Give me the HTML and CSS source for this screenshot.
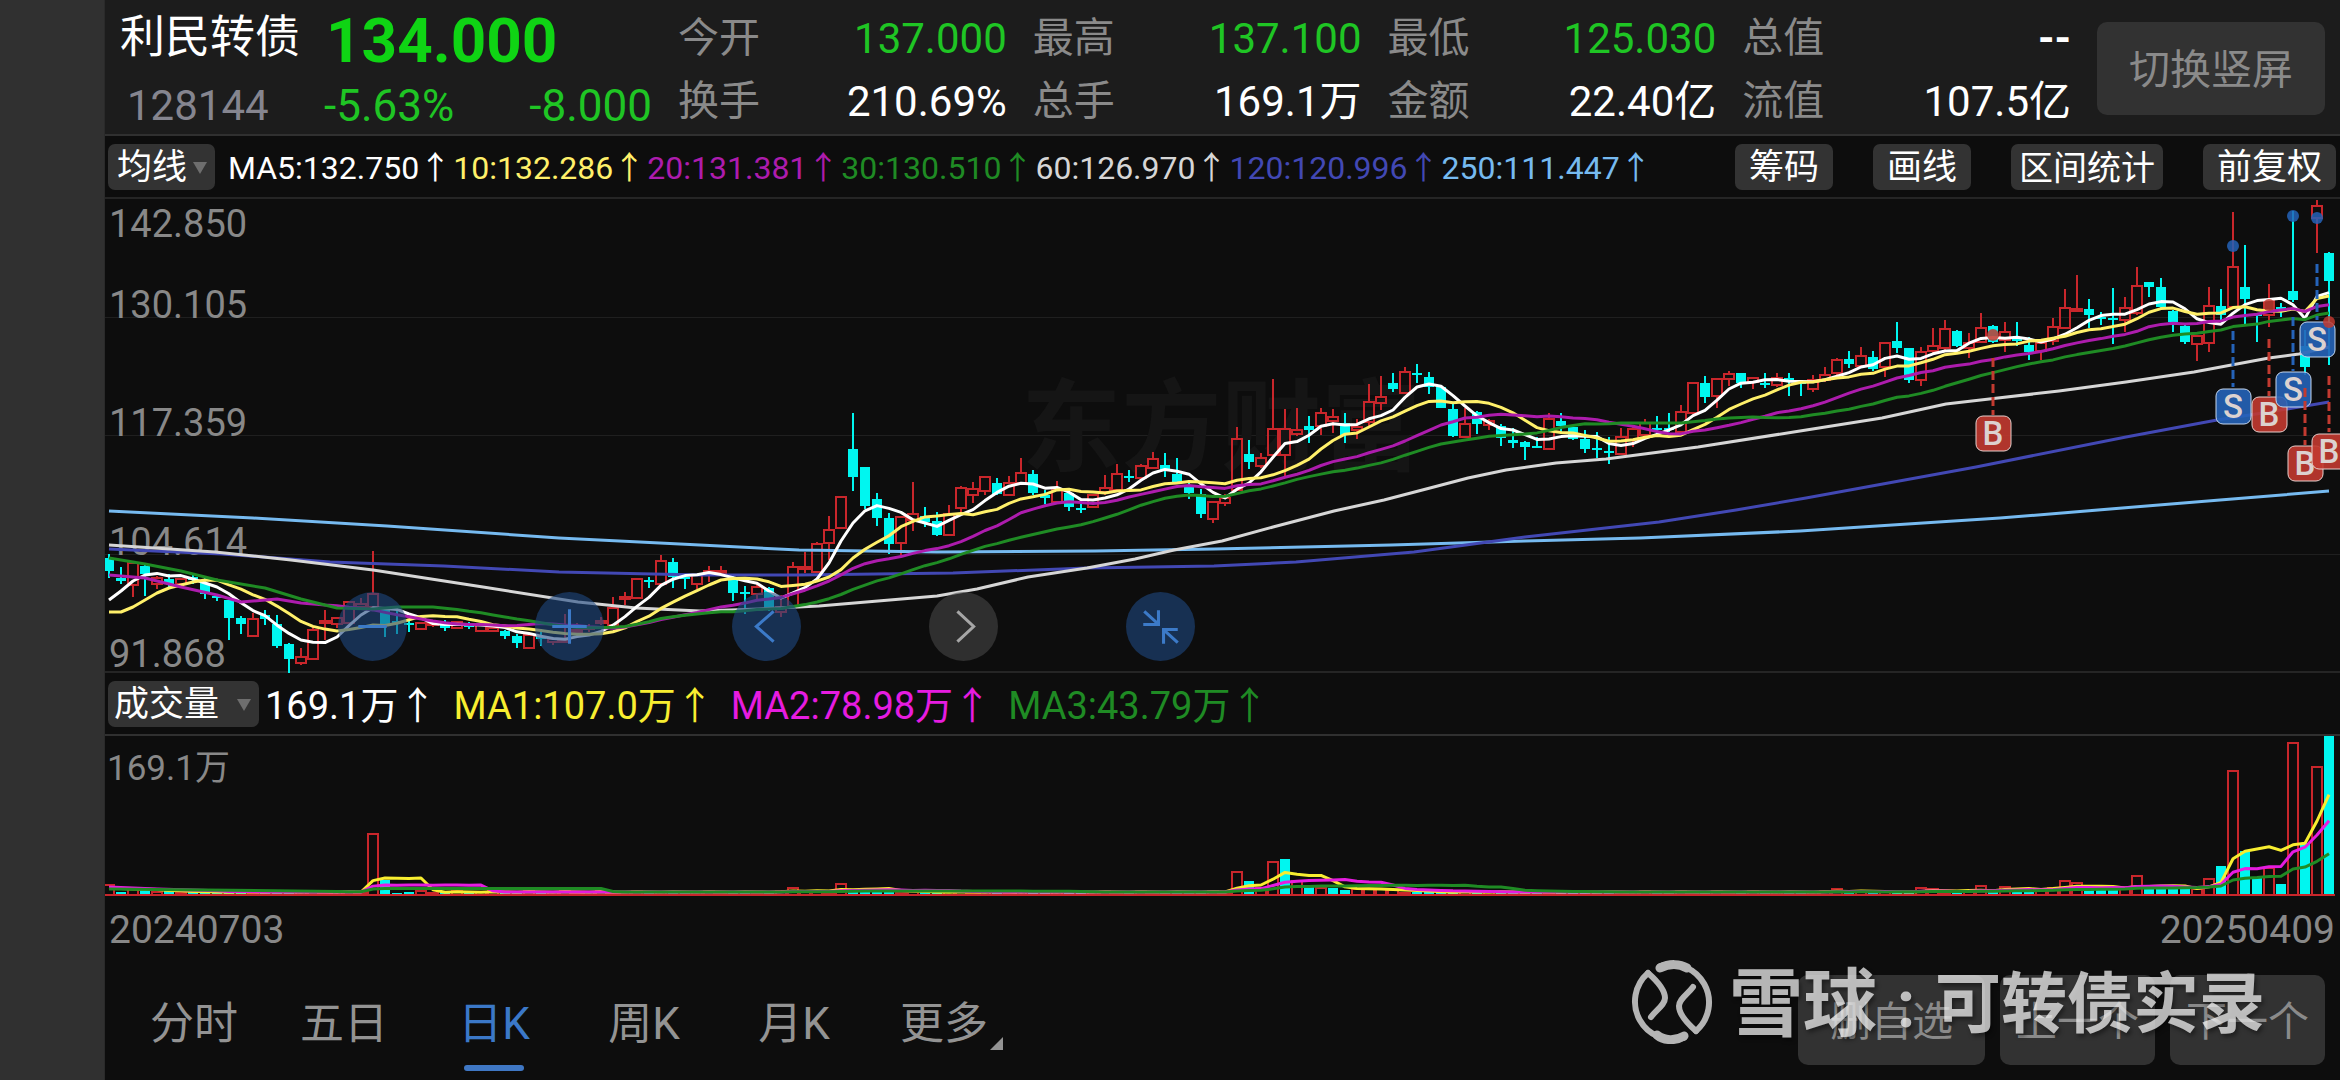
FILE: index.html
```html
<!DOCTYPE html>
<html lang="zh-CN">

<head>
    <meta charset="UTF-8">
    <meta name="viewport" content="width=device-width, initial-scale=1.0">
    <title>利民转债 128144</title>
    <link rel="stylesheet" href="styles.css">
</head>

<body>

    <div class="side"></div>

    <main class="main">
        <header class="header">
            <div class="stock">
                <div class="stock-row">
                    <h1 class="name">利民转债</h1>
                    <b class="last">134.000</b>
                </div>
                <div class="stock-row stock-sub">
                    <span class="code">128144</span>
                    <span class="pct down">-5.63%</span>
                    <span class="diff down">-8.000</span>
                </div>
            </div>

            <dl class="quote">
                <div><dt>今开</dt><dd class="down">137.000</dd></div>
                <div><dt>最高</dt><dd class="down">137.100</dd></div>
                <div><dt>最低</dt><dd class="down">125.030</dd></div>
                <div><dt>总值</dt><dd class="none">--</dd></div>
                <div><dt>换手</dt><dd>210.69%</dd></div>
                <div><dt>总手</dt><dd>169.1万</dd></div>
                <div><dt>金额</dt><dd>22.40亿</dd></div>
                <div><dt>流值</dt><dd>107.5亿</dd></div>
            </dl>

            <button class="rotate">切换竖屏</button>
        </header>

        <div class="bar">
            <button class="chip pick">均线<i class="tri"></i></button>
            <div class="ma-list">
                <span class="c-white">MA5:132.750<i class="up">↑</i></span>
                <span class="c-yellow">10:132.286<i class="up">↑</i></span>
                <span class="c-purple">20:131.381<i class="up">↑</i></span>
                <span class="c-green">30:130.510<i class="up">↑</i></span>
                <span class="c-gray">60:126.970<i class="up">↑</i></span>
                <span class="c-indigo">120:120.996<i class="up">↑</i></span>
                <span class="c-blue">250:111.447<i class="up">↑</i></span>
            </div>
            <div class="tools">
                <button class="chip">筹码</button>
                <button class="chip">画线</button>
                <button class="chip wide">区间统计</button>
                <button class="chip">前复权</button>
            </div>
        </div>

        <section class="kline">
            <div class="brand">东方财富</div>
            <div class="grid">
                <div><span>142.850</span><span>130.105</span></div>
                <div><span>117.359</span></div>
                <div><span>104.614</span></div>
                <div><span>91.868</span></div>
            </div>
            <svg class="chart" id="kline" viewBox="105 199 2235 474" preserveAspectRatio="none"></svg>
            <div class="floats">
                <button class="round" aria-label="缩小"><svg viewBox="0 0 68 68"><path d="M20 34H48" /></svg></button>
                <button class="round" aria-label="放大"><svg viewBox="0 0 68 68"><path d="M17 34H51M34 17V51" /></svg></button>
                <button class="round" aria-label="左移"><svg viewBox="0 0 68 68"><path d="M41 19L24 34L41 49" /></svg></button>
                <button class="round off" aria-label="右移"><svg viewBox="0 0 68 68"><path d="M28 19L44 34L28 49" /></svg></button>
                <button class="round" aria-label="收起"><svg viewBox="0 0 68 68"><path d="M18 19L31 31M17 32H32V18M51 50L38 38M37 51V37H51" /></svg></button>
            </div>
        </section>

        <div class="bar bar-vol">
            <button class="chip pick">成交量<i class="tri"></i></button>
            <div class="vol-list">
                <span class="c-white">169.1万<i class="up">↑</i></span>
                <span class="c-yellow2">MA1:107.0万<i class="up">↑</i></span>
                <span class="c-magenta">MA2:78.98万<i class="up">↑</i></span>
                <span class="c-green">MA3:43.79万<i class="up">↑</i></span>
            </div>
        </div>

        <section class="volume">
            <span class="vol-max">169.1万</span>
            <svg class="chart" id="volume" viewBox="105 736 2235 160" preserveAspectRatio="none"></svg>
        </section>

        <div class="dates">
            <span>20240703</span>
            <span>20250409</span>
        </div>

        <footer class="footer">
            <nav class="tabs">
                <a href="#">分时</a>
                <a href="#">五日</a>
                <a href="#" class="active">日K</a>
                <a href="#">周K</a>
                <a href="#">月K</a>
                <a href="#" class="more">更多</a>
            </nav>
            <div class="actions">
                <button>删自选</button>
                <button>上一个</button>
                <button>下一个</button>
            </div>
            <div class="mark">
                <svg class="mark-logo" viewBox="0 0 84 84">
                    <path d="M18 13A38 38 0 0 0 54 78" />
                    <path d="M30 6A38 38 0 0 1 66 71" />
                    <path class="thick" d="M30 8C40 3 50 4 57 8M27 75C34 81 46 81 54 76" />
                    <path d="M18 13C26 20 35 30 35 38C35 45 26 50 21 57" />
                    <path d="M66 71C58 64 49 54 49 46C49 39 58 34 63 27" />
                </svg>
                <b class="mark-brand">雪球</b>
                <b class="mark-user"><i>:</i>可转债实录</b>
            </div>
        </footer>
    </main>

    <script src="chart.js"></script>

</body>

</html>
```
FILE: styles.css
```css
* {
    box-sizing: border-box;
}

body {
    margin: 0;
    min-height: 100vh;
    display: flex;
    overflow-x: hidden;
    background-color: #0d0d0d;
    color: #fff;
    font-family: Roboto, "Liberation Sans", "Noto Sans CJK SC", sans-serif;
    font-size: 41px;
    line-height: 1;
}

button {
    border: 0;
    padding: 0;
    font: inherit;
    color: inherit;
    cursor: pointer;
}

i {
    font-style: normal;
}

.side {
    flex: 0 0 104px;
    background-color: #303030;
}

.main {
    flex: 1;
    min-width: 0;
    display: flex;
    flex-direction: column;
    border-left: 1px solid #2a2a2a;
}

.down {
    color: #1fc524;
}

/* header */

.header {
    height: 136px;
    padding: 2px 15px 0 0;
    display: flex;
    align-items: center;
    background-color: #1c1c1c;
    border-bottom: 2px solid #303030;
}

.stock {
    width: 547px;
    padding-left: 15px;
}

.stock-row {
    height: 67px;
    display: flex;
    align-items: center;
}

.stock-sub {
    padding-top: 8px;
}

.name {
    width: 206px;
    margin: 0;
    padding-top: 6px;
    font-size: 45px;
    font-weight: 400;
    white-space: nowrap;
}

.last {
    padding-top: 12px;
    font-size: 62px;
    font-weight: 700;
    color: #0fd414;
}

.code {
    width: 204px;
    padding-left: 7px;
    font-size: 42px;
    color: #85858f;
}

.pct,
.diff {
    font-size: 44px;
}

.diff {
    margin-left: auto;
}

.quote {
    flex: 1;
    margin: 0 26px;
    padding-top: 4px;
    display: grid;
    grid-template-columns: repeat(4, 1fr);
    column-gap: 26px;
}

.quote div {
    height: 63px;
    display: flex;
    align-items: center;
    justify-content: space-between;
}

.quote dt {
    color: #8a8a8a;
}

.quote dd {
    margin: 0;
    font-size: 42px;
}

.quote .none {
    font-weight: 700;
}

.rotate {
    width: 228px;
    height: 93px;
    padding-top: 4px;
    border-radius: 10px;
    background-color: #323232;
    color: #8a8a8a;
}

/* indicator bars */

.bar {
    height: 63px;
    padding: 0 4px 0 3px;
    display: flex;
    align-items: center;
    border-bottom: 2px solid #252525;
}

.chip {
    height: 46px;
    padding: 2px 14px 0;
    border-radius: 7px;
    background-color: #333;
    font-size: 35px;
    white-space: nowrap;
}

.wide {
    padding: 2px 8px 0;
    font-size: 34px;
}

.pick {
    padding: 2px 8px 0 9px;
    display: flex;
    align-items: center;
}

.tri {
    margin-left: 6px;
    border: 7px solid transparent;
    border-top: 12px solid #6e6e6e;
    border-bottom: 0;
}

.up {
    font-family: "Noto Sans CJK SC", sans-serif;
}

.ma-list {
    margin-left: 13px;
    display: flex;
    gap: 2px;
    font-size: 32px;
    white-space: nowrap;
}

.tools {
    margin-left: auto;
    display: flex;
    gap: 40px;
}

.bar-vol {
    border-bottom-color: #303030;
}

.bar-vol .pick {
    padding: 2px 8px 0 6px;
}

.bar-vol .tri {
    margin-left: 18px;
}

.vol-list {
    margin-left: 6px;
    padding-top: 2px;
    display: flex;
    gap: 17px;
    font-size: 38px;
    white-space: nowrap;
}

.c-white {
    color: #fff;
}

.c-yellow {
    color: #fff06a;
}

.c-yellow2 {
    color: #f8ee30;
}

.c-purple {
    color: #ad1cad;
}

.c-magenta {
    color: #e61ce0;
}

.c-green {
    color: #1f8b24;
}

.c-gray {
    color: #d6d6d6;
}

.c-indigo {
    color: #4248b4;
}

.c-blue {
    color: #76baf0;
}

/* charts */

.kline {
    flex: 474 1 0;
    min-height: 300px;
    position: relative;
    overflow: hidden;
}

.chart {
    width: 100%;
    height: 100%;
    position: absolute;
    left: 0;
    top: 0;
    fill: none;
}

.brand {
    position: absolute;
    left: 41%;
    top: 38%;
    font-size: 100px;
    font-weight: 700;
    color: #151515;
}

.grid {
    height: 100%;
    display: grid;
    grid-template-rows: repeat(4, 1fr);
    color: #888;
    font-size: 38px;
}

.grid div {
    padding: 6px 4px 0;
    display: flex;
    flex-direction: column;
    justify-content: space-between;
    border-bottom: 1px solid #1f1f1f;
}

.grid span:last-child {
    margin-top: auto;
    margin-bottom: -7px;
}

.grid div:last-child {
    border-bottom: 2px solid #252525;
}

.grid div:last-child span {
    margin-bottom: -2px;
}

.floats {
    position: absolute;
    left: 233px;
    bottom: 12px;
    display: flex;
    gap: 128px;
}

.round {
    width: 69px;
    height: 69px;
    border-radius: 50%;
    background-color: rgba(30, 72, 128, 0.6);
}

.round svg {
    display: block;
    fill: none;
    stroke: #3c7ac8;
    stroke-width: 3;
}

.off {
    background-color: rgba(70, 70, 70, 0.6);
}

.off svg {
    stroke: #a6a6a6;
}

.volume {
    flex: 160 1 0;
    min-height: 100px;
    position: relative;
}

.vol-max {
    display: block;
    margin: 15px 2px;
    color: #888;
    font-size: 35px;
}

.cyan {
    stroke: #00f6f0;
    stroke-width: 2;
}

.cyan-body {
    fill: #00f6f0;
}

.red {
    stroke: #c8262b;
    stroke-width: 2;
}

.line {
    stroke: currentColor;
    stroke-width: 3;
    stroke-linejoin: round;
}

.buy {
    color: #c23a30;
}

.sell {
    color: #2563b8;
}

.marker-stem {
    stroke: currentColor;
    stroke-width: 3;
    stroke-dasharray: 9 4;
}

.marker-dot {
    fill: currentColor;
    opacity: 0.85;
}

.marker-box {
    fill: currentColor;
    fill-opacity: 0.9;
    stroke: #e5cfcc;
    stroke-width: 1;
}

.sell .marker-box {
    stroke: #c4d6ee;
}

.marker-text {
    fill: #dcd2d0;
    font-size: 33px;
    font-weight: 500;
    text-anchor: middle;
}

.dates {
    height: 64px;
    padding: 5px 5px 0 4px;
    display: flex;
    align-items: center;
    justify-content: space-between;
    color: #888;
    font-size: 39px;
}

/* footer */

.footer {
    height: 120px;
    padding: 0 15px 0 14px;
    position: relative;
    display: flex;
    align-items: center;
    justify-content: space-between;
}

.tabs {
    display: grid;
    grid-template-columns: repeat(6, 150px);
    font-size: 44px;
}

.tabs a {
    height: 96px;
    padding-top: 30px;
    position: relative;
    text-align: center;
    color: #939393;
    text-decoration: none;
}

.tabs .active {
    color: #3b78c8;
}

.active::after {
    content: "";
    width: 60px;
    height: 6px;
    border-radius: 3px;
    background-color: #3f77c4;
    position: absolute;
    left: 45px;
    bottom: -3px;
}

.more::after {
    content: "";
    border-left: 13px solid transparent;
    border-bottom: 13px solid #939393;
    position: absolute;
    right: 16px;
    bottom: 18px;
}

.actions {
    display: flex;
    gap: 15px;
}

.actions button {
    height: 90px;
    padding: 4px 16px 0;
    border-radius: 10px;
    background-color: #323232;
    color: #8a8a8a;
}

.actions button:first-child {
    padding: 4px 32px 0;
}

.mark {
    position: absolute;
    right: 75px;
    top: 0;
    display: flex;
    align-items: center;
    height: 84px;
    color: rgba(255, 255, 255, 0.7);
    white-space: nowrap;
    pointer-events: none;
    text-shadow: 2px 3px 4px rgba(0, 0, 0, 0.4);
}

.mark-logo {
    width: 84px;
    height: 84px;
    margin-right: 15px;
    fill: none;
    stroke: #b4b4b4;
    stroke-width: 6;
    stroke-linecap: round;
}

.mark-logo .thick {
    stroke-width: 9;
}

.mark-brand {
    padding-top: 6px;
    font-size: 74px;
}

.mark-user {
    padding-top: 6px;
    font-size: 66px;
}

.mark-user i {
    width: 58px;
    display: inline-block;
    text-align: center;
}
```
FILE: chart.js
```js
const STEP = 12;
const LEFT = 109;
const BASE = 895;

// high, body top, body bottom, low, r = rise / f = fall
const days = `554 558 571 578 f,567 578 581 584 f,563 563 585 597 r,565 566 574 596 f,576 578 584 589 r,574 579 584 588 f,579 579 584 584 r,574 577 580 584 f,578 583 594 599 f,594 596 598 601 f,
600 600 618 640 f,616 618 624 634 f,613 619 636 636 r,610 615 619 625 f,615 624 646 648 f,643 644 659 673 f,648 657 663 665 r,627 630 659 659 r,610 621 623 640 r,617 618 624 628 r,
602 602 623 623 r,598 604 607 610 r,551 594 607 607 r,610 610 624 637 f,610 621 623 634 f,620 623 625 632 f,623 623 629 629 r,622 623 625 627 r,620 624 628 631 f,621 622 628 628 r,
622 625 627 629 f,625 625 631 631 r,627 628 631 632 r,630 631 636 639 f,634 636 643 648 f,635 635 648 648 r,629 637 639 646 f,637 639 642 645 r,614 640 642 643 r,623 630 632 637 r,
624 627 629 632 r,617 621 623 625 r,597 608 625 625 r,592 597 599 605 r,579 579 598 598 r,577 580 582 588 f,555 561 584 586 r,558 562 577 588 f,575 577 579 589 f,574 575 584 589 r,
566 571 573 582 r,566 571 573 575 r,576 577 593 601 f,586 592 594 614 f,583 587 594 600 r,587 588 610 611 f,595 607 612 617 r,562 567 606 606 r,552 567 569 573 r,542 544 572 572 r,
516 530 543 560 r,496 497 528 528 r,413 449 477 491 f,467 467 506 509 f,493 499 518 526 f,513 518 544 554 f,516 517 543 555 r,482 514 520 531 r,507 516 522 527 f,512 521 535 536 f,
505 514 535 536 r,486 488 508 512 r,482 489 495 503 r,477 477 491 495 r,478 483 494 495 f,476 483 495 496 r,458 473 483 483 r,470 474 493 495 f,490 495 498 504 f,481 490 502 502 r,
493 493 507 511 f,504 508 510 513 f,495 495 507 507 r,475 488 492 495 r,464 474 490 490 r,470 476 478 482 f,464 466 478 479 r,452 459 468 469 r,453 465 470 477 f,458 474 483 483 f,
480 486 493 499 f,489 494 514 518 f,501 502 519 523 r,494 498 503 506 r,427 439 490 491 r,440 454 462 469 f,453 458 466 468 r,379 429 455 455 r,409 429 455 477 r,408 430 434 436 r,
416 426 430 443 f,408 413 426 435 r,409 417 421 433 r,413 423 435 443 f,419 427 430 439 r,384 402 422 427 r,376 397 403 410 r,373 383 389 392 f,367 372 393 394 r,364 373 375 383 f,
372 377 387 394 f,386 387 408 408 f,404 409 436 437 f,408 424 437 437 r,411 412 424 434 f,419 421 425 430 r,424 426 438 446 f,428 440 443 448 f,441 442 447 460 f,437 446 448 448 f,
413 419 449 449 r,413 421 426 434 f,427 427 439 440 f,430 439 449 453 f,432 448 450 458 f,437 451 453 464 f,428 437 454 455 r,425 429 440 447 r,419 423 435 437 r,416 428 430 435 f,
413 428 430 432 f,405 412 432 433 r,383 383 413 413 r,376 383 397 403 f,378 379 396 408 r,371 374 379 386 r,373 373 383 388 f,377 378 382 389 r,373 383 385 388 f,373 378 385 387 r,
373 378 382 396 f,381 382 384 396 f,375 380 389 392 r,367 375 380 382 r,358 360 373 375 r,351 359 364 368 f,347 356 366 368 r,351 357 369 371 f,342 343 367 377 r,322 341 348 353 f,
348 348 380 383 f,347 352 380 386 r,328 346 351 353 r,320 329 348 350 r,330 331 346 347 f,333 343 348 358 r,313 328 342 343 r,325 326 342 343 f,322 332 340 352 r,322 339 341 346 f,
337 345 352 360 f,342 343 351 360 r,318 327 341 345 r,289 308 328 328 r,275 309 311 312 r,299 309 315 328 f,312 317 319 325 f,288 318 320 344 f,297 308 320 332 r,267 286 313 315 r,
282 282 287 297 f,278 287 307 308 f,310 311 322 332 f,325 326 342 344 f,335 336 344 361 r,287 306 343 352 r,289 306 315 320 f,212 267 307 307 r,245 287 299 325 f,313 314 316 342 f,
284 300 315 327 r,303 307 309 317 f,211 291 300 302 f,330 346 367 375 f,200 206 218 253 r,252 253 281 365 f`
    .split(",").map(row => {
        const [high, top, bottom, low, dir] = row.trim().split(" ");
        return { high: +high, top: +top, bottom: +bottom, low: +low, rise: dir === "r" };
    });

// days with a volume worth seeing, negative = fall
const bigVolume = {
    0: 10, 2: 6, 3: -6, 22: 61, 23: -15, 57: 7, 61: 11, 62: -6, 63: -6, 64: -5, 94: 23, 95: -14, 96: 7, 97: 33,
    98: -36, 99: 14, 100: -8, 101: 7, 102: -7, 103: -5, 104: 6, 105: 6, 106: 6, 107: 5, 144: 6, 151: 7, 152: 6,
    156: 9, 158: 8, 159: -6, 160: -6, 161: 5, 162: 7, 163: 14, 164: 12, 165: -6, 166: -5, 167: -5, 168: 7,
    169: 19, 170: -7, 171: -7, 172: -6, 173: -6, 174: 6, 175: 16, 176: -29, 177: 124, 178: -44, 179: -17,
    180: 27, 181: -11, 182: 152, 183: -52, 184: 128, 185: -159
};

const x = i => LEFT + i * STEP;

function candle(d, i) {
    const body = d.bottom - d.top;
    if (d.rise) {
        return `<path class="red" d="M${x(i)} ${d.high}V${d.top}M${x(i)} ${d.bottom}V${d.low}M${x(i) - 5} ${d.top}h10v${body}h-10z" />`;
    }
    return `<path class="cyan" d="M${x(i)} ${d.high}V${d.low}" />
        <rect class="cyan-body" x="${x(i) - 5}" y="${d.top}" width="10" height="${body}" />`;
}

function volumeBar(v, i) {
    const h = Math.abs(v);
    if (v > 0) {
        return `<rect class="red" x="${x(i) - 5}" y="${BASE - h}" width="10" height="${h}" />`;
    }
    return `<rect class="cyan-body" x="${x(i) - 5}" y="${BASE - h}" width="10" height="${h - 1}" />`;
}

function line(points, color) {
    return `<polyline class="line ${color}" points="${points.map(p => p.join()).join(" ")}" />`;
}

// moving average, start = points of the first days where the history is not loaded
function average(values, n, start) {
    const points = start.map(([i, y]) => [x(i), y]);
    for (let i = n - 1; i < values.length; i++) {
        const sum = values.slice(i - n + 1, i + 1).reduce((a, b) => a + b, 0);
        points.push([x(i), Math.round(sum / n * 10) / 10]);
    }
    return points;
}

function marker([i, kind, dot, from, to, y]) {
    const color = kind === "B" ? "buy" : "sell";
    return `<g class="${color}">
        ${dot ? `<circle class="marker-dot" cx="${x(i)}" cy="${dot}" r="6" />` : ""}
        <path class="marker-stem" d="M${x(i)} ${from}V${to}" />
        <rect class="marker-box" x="${x(i) - 17}" y="${y - 17}" width="35" height="35" rx="7" />
        <text class="marker-text" x="${x(i)}" y="${y + 12}">${kind}</text>
    </g>`;
}

const ma60 = [[109, 545], [215, 552], [291, 560], [373, 570], [483, 587], [578, 602], [636, 608], [700, 611], [759, 609], [819, 606], [878, 601], [937, 596], [977, 589], [1028, 577], [1087, 568], [1135, 559], [1174, 550], [1222, 541], [1273, 527], [1334, 511], [1384, 500], [1430, 488], [1468, 478], [1506, 470], [1556, 463], [1606, 459], [1698, 447], [1800, 431], [1882, 418], [1946, 404], [1998, 398], [2059, 391], [2126, 382], [2194, 372], [2269, 358], [2299, 354], [2329, 347]];
const ma120 = [[109, 549], [222, 554], [330, 562], [444, 566], [559, 572], [700, 575], [799, 575], [953, 573], [1087, 568], [1214, 566], [1296, 562], [1414, 552], [1525, 537], [1659, 522], [1736, 510], [1806, 498], [1976, 467], [2126, 437], [2217, 420], [2269, 412], [2329, 402]];
const ma250 = [[109, 511], [253, 518], [387, 526], [559, 538], [700, 545], [799, 550], [937, 552], [1095, 551], [1214, 549], [1391, 545], [1525, 541], [1640, 538], [1800, 531], [2000, 518], [2220, 500], [2329, 491]];

// day, kind, dot, stem from, stem to, box center
const trades = [
    [157, "B", 335, 358, 415, 433],
    [177, "S", 246, 331, 387, 406],
    [180, "B", 305, 339, 396, 414],
    [182, "S", 216, 317, 371, 389],
    [183, "B", 0, 388, 445, 463],
    [184, "S", 218, 264, 320, 339],
    [185, "B", 322, 376, 432, 451]
];

const close = days.map(d => d.rise ? d.top : d.bottom);

document.querySelector("#kline").innerHTML =
    days.map(candle).join("") +
    line(ma250, "c-blue") +
    line(ma120, "c-indigo") +
    line(ma60, "c-gray") +
    line(average(close, 5, [[0, 600], [1, 591], [2, 581], [3, 575]]), "c-white") +
    line(average(close, 10, [[0, 612], [1, 612], [2, 607], [3, 600], [4, 593], [5, 588], [6, 585], [7, 582], [8, 580]]), "c-yellow") +
    line(average(close, 20, [[0, 575], [3, 578], [6, 587], [9, 595], [11, 602], [14, 599], [16, 603], [18, 605]]), "c-purple") +
    line(average(close, 30, [[0, 558], [3, 564], [6, 571], [9, 580], [13, 588], [16, 599], [19, 608], [22, 609], [24, 607], [27, 607]]), "c-green") +
    trades.map(marker).join("");

const volume = days.map((d, i) => bigVolume[i] || (2 + i * 7 % 3) * (d.rise ? 1 : -1));
const volumeTop = volume.map(v => BASE - Math.abs(v));

document.querySelector("#volume").innerHTML =
    `<path class="red" d="M105 ${BASE}H2335" />` +
    volume.map(volumeBar).join("") +
    line(average(volumeTop, 5, [[0, 888], [2, 889]]), "c-yellow2") +
    line(average(volumeTop, 10, [[0, 887], [4, 889]]), "c-magenta") +
    line(average(volumeTop, 20, [[0, 889], [8, 890]]), "c-green");
```
